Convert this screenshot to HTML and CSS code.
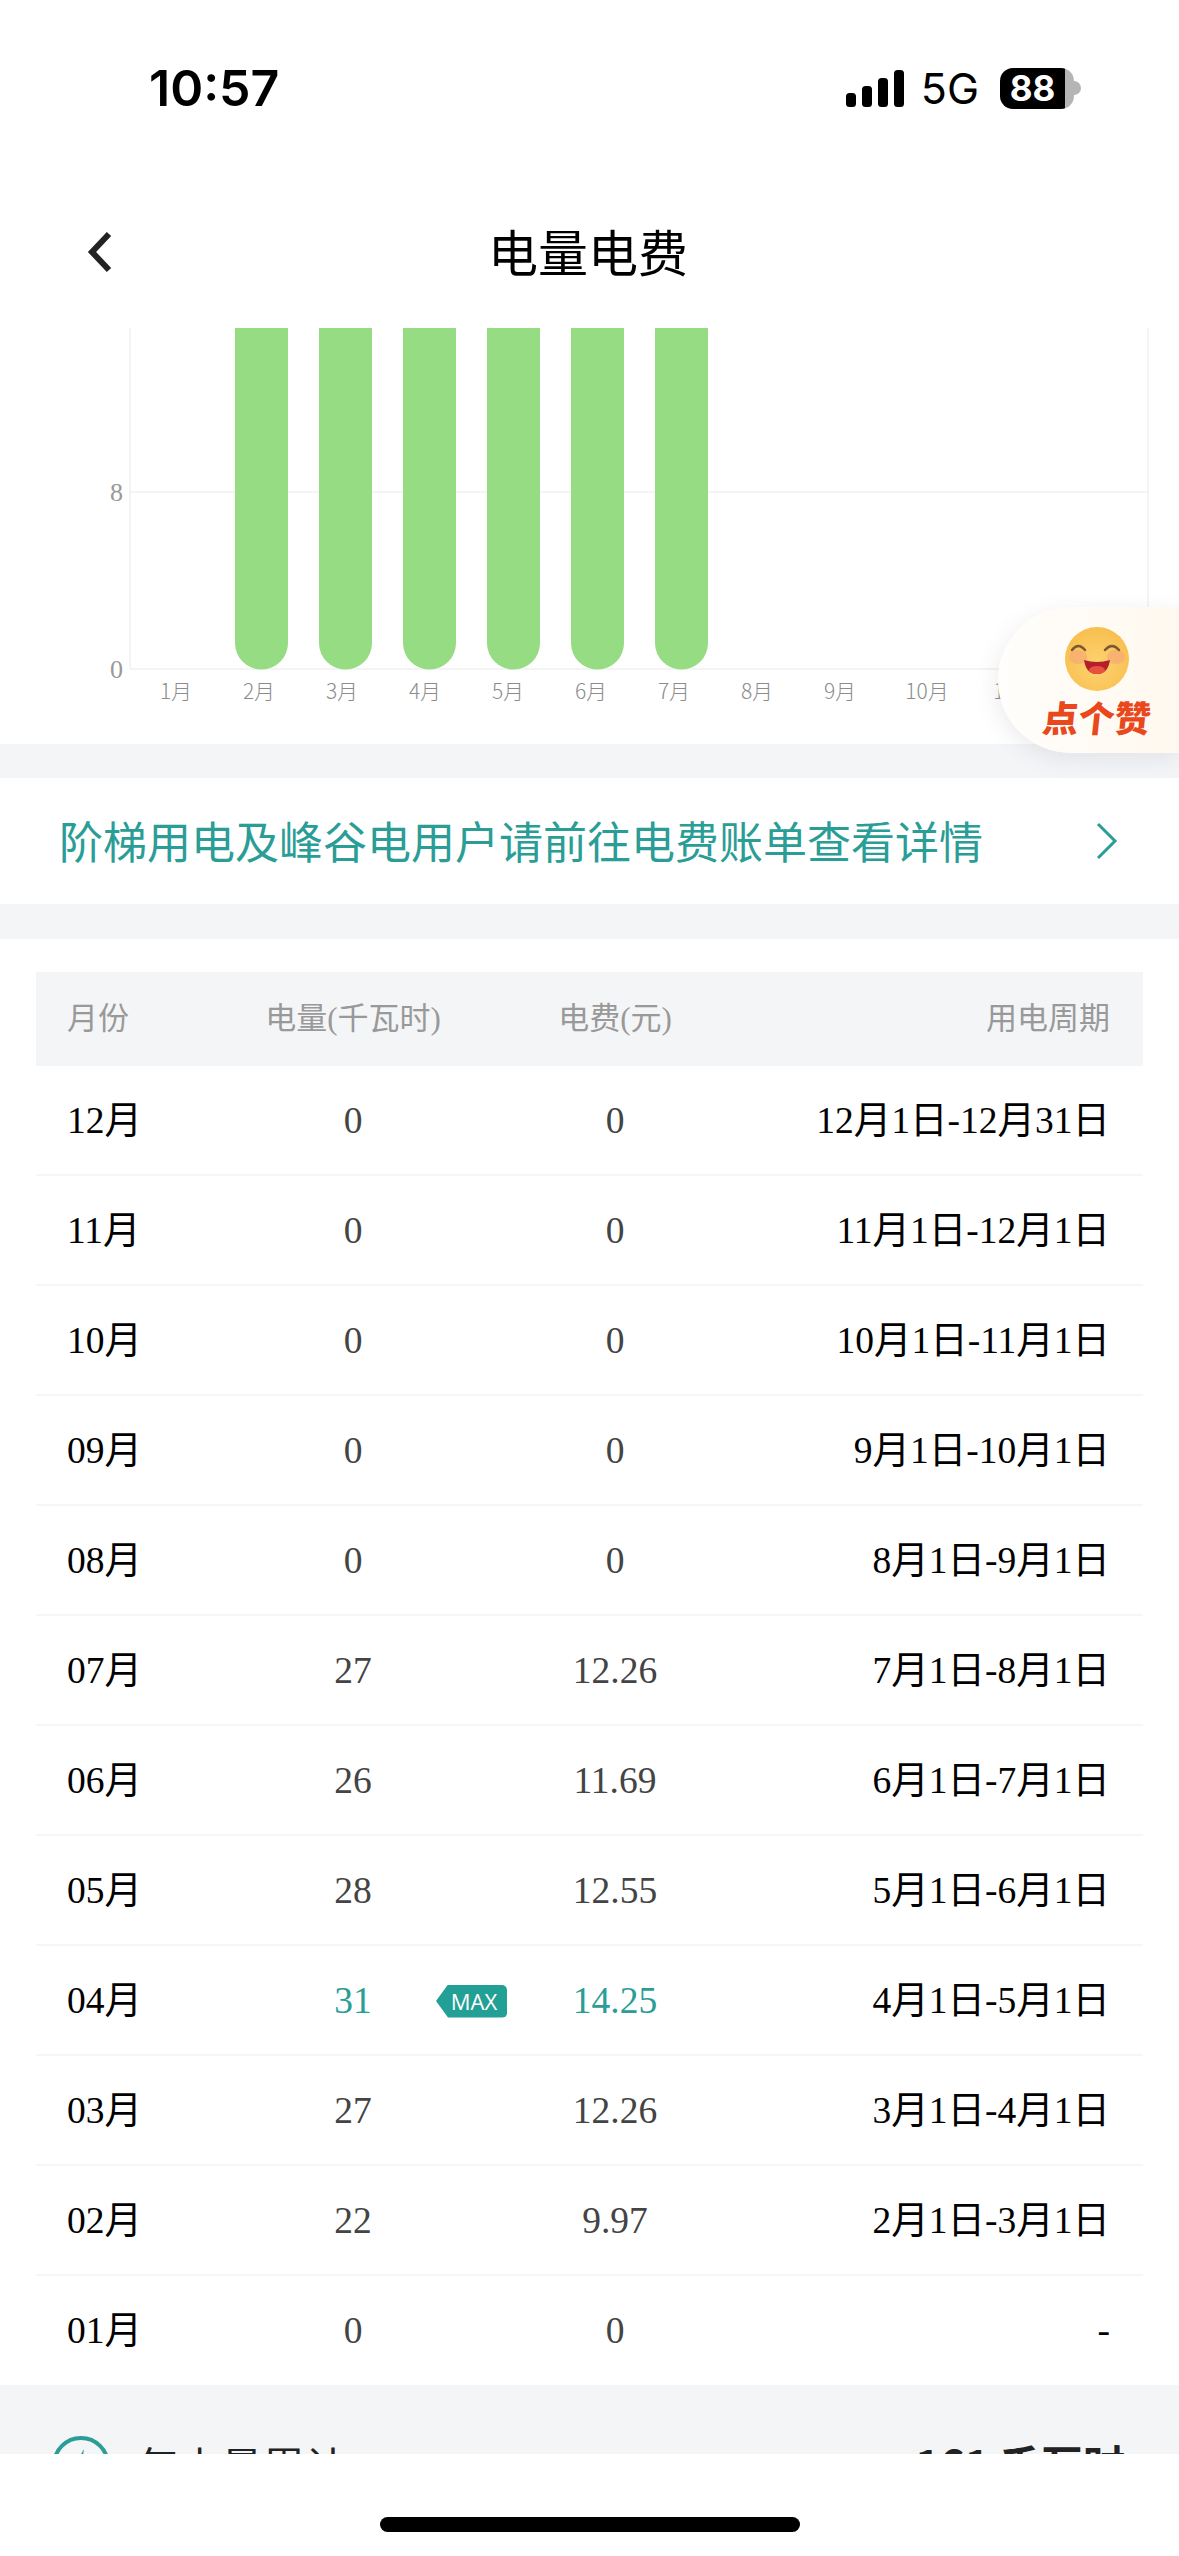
FILE: index.html
```html
<!DOCTYPE html>
<html lang="zh-CN">

<head>
    <meta charset="UTF-8">
    <meta name="viewport" content="width=device-width, initial-scale=1.0">
    <title>电量电费</title>
    <link rel="stylesheet" href="styles.css">
</head>

<body>
    <div class="page">
        <div class="status-bar">
            <span class="time">10:57</span>
            <div class="status-right">
                <svg class="signal" width="58" height="37" viewBox="0 0 58 37">
                    <rect x="0" y="23" width="10" height="14" rx="3.5" />
                    <rect x="16" y="16" width="10" height="21" rx="3.5" />
                    <rect x="32" y="8" width="10" height="29" rx="3.5" />
                    <rect x="48" y="0" width="10" height="37" rx="3.5" />
                </svg>
                <span class="network">5G</span>
                <div class="battery">
                    <div class="battery-body"><span>88</span></div>
                    <div class="battery-nub"></div>
                </div>
            </div>
        </div>

        <div class="nav">
            <svg class="back" width="26" height="42" viewBox="0 0 26 42">
                <path d="M22 3 L5 21 L22 39" fill="none" stroke="#222" stroke-width="6" stroke-linejoin="miter" />
            </svg>
            <span class="nav-title">电量电费</span>
        </div>

        <div class="scroll">
            <div class="chart">
                <svg width="1179" height="416" viewBox="0 0 1179 416">
                    <g stroke="#f0f0f0" stroke-width="1.5">
                        <line x1="130" y1="0" x2="130" y2="341" />
                        <line x1="1148" y1="0" x2="1148" y2="341" />
                        <line x1="130" y1="164" x2="1148" y2="164" />
                        <line x1="130" y1="341" x2="1148" y2="341" />
                    </g>
                    <g fill="#95dc82">
                        <path d="M235 0 h53 v315 a26.5 26.5 0 0 1 -53 0 z" />
                        <path d="M319 0 h53 v315 a26.5 26.5 0 0 1 -53 0 z" />
                        <path d="M403 0 h53 v315 a26.5 26.5 0 0 1 -53 0 z" />
                        <path d="M487 0 h53 v315 a26.5 26.5 0 0 1 -53 0 z" />
                        <path d="M571 0 h53 v315 a26.5 26.5 0 0 1 -53 0 z" />
                        <path d="M655 0 h53 v315 a26.5 26.5 0 0 1 -53 0 z" />
                    </g>
                    <g class="axis-y" text-anchor="end">
                        <text x="123" y="173">8</text>
                        <text x="123" y="350">0</text>
                    </g>
                    <g class="axis-x" text-anchor="middle">
                        <text x="176" y="371">1月</text>
                        <text x="259" y="371">2月</text>
                        <text x="342" y="371">3月</text>
                        <text x="425" y="371">4月</text>
                        <text x="508" y="371">5月</text>
                        <text x="591" y="371">6月</text>
                        <text x="674" y="371">7月</text>
                        <text x="757" y="371">8月</text>
                        <text x="840" y="371">9月</text>
                        <text x="927" y="371">10月</text>
                        <text x="1015" y="371">11月</text>
                    </g>
                </svg>
            </div>

            <div class="band"></div>

            <div class="notice">
                <span class="notice-text">阶梯用电及峰谷电用户请前往电费账单查看详情</span>
                <svg width="22" height="38" viewBox="0 0 22 38">
                    <path d="M2 2 L19 19 L2 36" fill="none" stroke="#2a9d96" stroke-width="3" />
                </svg>
            </div>

            <div class="band band-low"></div>

            <div class="table">
                <div class="row head">
                    <span>月份</span>
                    <span class="center">电量(千瓦时)</span>
                    <span class="center">电费(元)</span>
                    <span class="right">用电周期</span>
                </div>
                <div class="row">
                    <span class="month">12月</span><span class="center num">0</span><span class="center num">0</span><span class="right date">12月1日-12月31日</span>
                </div>
                <div class="row">
                    <span class="month">11月</span><span class="center num">0</span><span class="center num">0</span><span class="right date">11月1日-12月1日</span>
                </div>
                <div class="row">
                    <span class="month">10月</span><span class="center num">0</span><span class="center num">0</span><span class="right date">10月1日-11月1日</span>
                </div>
                <div class="row">
                    <span class="month">09月</span><span class="center num">0</span><span class="center num">0</span><span class="right date">9月1日-10月1日</span>
                </div>
                <div class="row">
                    <span class="month">08月</span><span class="center num">0</span><span class="center num">0</span><span class="right date">8月1日-9月1日</span>
                </div>
                <div class="row">
                    <span class="month">07月</span><span class="center num">27</span><span class="center num">12.26</span><span class="right date">7月1日-8月1日</span>
                </div>
                <div class="row">
                    <span class="month">06月</span><span class="center num">26</span><span class="center num">11.69</span><span class="right date">6月1日-7月1日</span>
                </div>
                <div class="row">
                    <span class="month">05月</span><span class="center num">28</span><span class="center num">12.55</span><span class="right date">5月1日-6月1日</span>
                </div>
                <div class="row">
                    <span class="month">04月</span>
                    <span class="center num max">31<span class="max-tag">MAX</span></span>
                    <span class="center num max">14.25</span>
                    <span class="right date">4月1日-5月1日</span>
                </div>
                <div class="row">
                    <span class="month">03月</span><span class="center num">27</span><span class="center num">12.26</span><span class="right date">3月1日-4月1日</span>
                </div>
                <div class="row">
                    <span class="month">02月</span><span class="center num">22</span><span class="center num">9.97</span><span class="right date">2月1日-3月1日</span>
                </div>
                <div class="row last">
                    <span class="month">01月</span><span class="center num">0</span><span class="center num">0</span><span class="right date">-</span>
                </div>
            </div>

            <div class="total">
                <div class="total-left">
                    <svg width="58" height="58" viewBox="0 0 58 58">
                        <circle cx="29" cy="29" r="27" fill="none" stroke="#2a9d96" stroke-width="4" />
                        <path d="M32 13 L21 32 H29 L26 45 L38 26 H30 z" fill="#2a9d96" />
                    </svg>
                    <span>年电量累计</span>
                </div>
                <span class="total-value">161 千瓦时</span>
            </div>
        </div>

        <div class="footer">
            <div class="home-bar"></div>
        </div>

        <div class="like">
            <svg width="66" height="66" viewBox="0 0 66 66">
                <defs>
                    <radialGradient id="face" cx="50%" cy="60%" r="60%">
                        <stop offset="0%" stop-color="#fdd272" />
                        <stop offset="100%" stop-color="#f8bf4e" />
                    </radialGradient>
                </defs>
                <circle cx="33" cy="33" r="32" fill="url(#face)" />
                <ellipse cx="14" cy="31" rx="9" ry="7" fill="#f7a878" opacity="0.7" />
                <ellipse cx="52" cy="31" rx="9" ry="7" fill="#f7a878" opacity="0.7" />
                <path d="M8 24 Q14 16 21 24 M41 24 Q48 16 55 24" fill="none" stroke="#7a5a34" stroke-width="2.5" stroke-linecap="round" />
                <path d="M20 34 Q33 38 46 34 Q44 48 33 48 Q22 48 20 34 z" fill="#b3202a" />
                <ellipse cx="33" cy="44" rx="8" ry="4" fill="#e8503f" />
            </svg>
            <span class="like-text">点个赞</span>
        </div>
    </div>
</body>

</html>
```

FILE: styles.css
```css
* {
    box-sizing: border-box;
}

body {
    margin: 0;
    background: #fff;
    font-family: "Noto Sans CJK SC", sans-serif;
}

.page {
    position: relative;
    width: 1179px;
    height: 2556px;
    display: flex;
    flex-direction: column;
    overflow: hidden;
}

/* status bar */
.status-bar {
    height: 176px;
    flex: none;
    display: flex;
    align-items: center;
    justify-content: space-between;
    padding: 0 98px 0 149px;
}

.time {
    font-family: Inter, sans-serif;
    font-size: 50px;
    font-weight: 600;
    color: #000;
}

.status-right {
    display: flex;
    align-items: center;
}

.signal {
    margin-right: 17px;
}

.network {
    font-family: Inter, sans-serif;
    font-size: 43px;
    color: #000;
    margin-right: 21px;
}

.battery {
    display: flex;
    align-items: center;
}

.battery-body {
    width: 74px;
    height: 41px;
    border-radius: 13px;
    background: linear-gradient(to right, #000 0, #000 65px, #b5b5b5 65px);
    padding-right: 9px;
    display: flex;
    align-items: center;
    justify-content: center;
}

.battery-body span {
    font-family: Inter, sans-serif;
    font-size: 35px;
    font-weight: 700;
    color: #fff;
}

.battery-nub {
    width: 7px;
    height: 14px;
    background: #b5b5b5;
    border-radius: 0 7px 7px 0;
}

/* nav */
.nav {
    height: 152px;
    flex: none;
    display: flex;
    align-items: center;
    justify-content: center;
    position: relative;
}

.back {
    position: absolute;
    left: 87px;
    top: 55px;
}

.nav-title {
    font-size: 50px;
    line-height: 60px;
    margin-top: -5px;
    margin-left: -3px;
    color: #000;
}

/* content */
.scroll {
    flex: 1;
    min-height: 0;
    overflow: hidden;
}

.chart {
    height: 416px;
}

.chart svg {
    display: block;
}

.axis-y text {
    font-family: "Liberation Serif", serif;
    font-size: 26px;
    fill: #999;
}

.axis-x text {
    font-family: "Noto Sans CJK SC", sans-serif;
    font-size: 21px;
    font-weight: 300;
    fill: #8c8c8c;
}

.band {
    height: 34px;
    background: #f4f5f7;
}

.band-low {
    height: 35px;
}

.notice {
    height: 126px;
    display: flex;
    align-items: center;
    justify-content: space-between;
    padding: 0 61px 0 59px;
}

.notice-text {
    font-size: 44px;
    line-height: 60px;
    margin-top: -3px;
    color: #2a9d96;
}

.table {
    padding: 33px 36px 0;
    font-family: "Liberation Serif", "Noto Sans CJK SC", serif;
}

.row {
    height: 110px;
    display: grid;
    grid-template-columns: 163px 246px 278px 389px;
    align-items: center;
    padding-left: 31px;
    padding-top: 1px;
    border-bottom: 2px solid #f6f6f6;
    font-size: 37.5px;
    line-height: 44px;
}

.row.last {
    height: 109px;
    border-bottom: none;
}

.head {
    height: 94px;
    padding-top: 0;
    background: #f4f5f7;
    border-bottom: none;
    font-size: 31px;
    color: #999;
}

.month,
.date {
    color: #000;
}

.center {
    text-align: center;
}

.right {
    text-align: right;
    padding-right: 33px;
}

.num {
    color: #444;
    position: relative;
}

.max {
    color: #2a9d96;
}

.max-tag {
    position: absolute;
    left: 206px;
    top: 6px;
    width: 71px;
    height: 33px;
    padding-left: 5px;
    background: #23a096;
    color: #fff;
    font-family: "Open Sans", sans-serif;
    font-size: 22px;
    line-height: 33px;
    text-align: center;
    border-radius: 0 5px 5px 0;
    clip-path: polygon(12px 0, 100% 0, 100% 100%, 12px 100%, 0 50%);
}

.total {
    height: 200px;
    background: #f4f5f7;
    display: flex;
    justify-content: space-between;
    align-items: flex-start;
    padding: 49px 54px 0 52px;
}

.total-left {
    display: flex;
    align-items: center;
    gap: 27px;
    font-size: 42px;
    color: #222;
}

.total-value {
    font-size: 42px;
    font-weight: 700;
    color: #222;
    line-height: 58px;
}

.footer {
    height: 102px;
    flex: none;
    background: #fff;
    display: flex;
    justify-content: center;
    padding-top: 63px;
}

.home-bar {
    width: 420px;
    height: 15px;
    border-radius: 8px;
    background: #000;
}

/* floating like button */
.like {
    position: absolute;
    left: 998px;
    top: 607px;
    width: 181px;
    height: 146px;
    border-radius: 73px 0 0 73px;
    background: linear-gradient(to right, #fffefc, #fff8ee);
    box-shadow: -2px 6px 22px rgba(120, 120, 140, 0.14);
    display: flex;
    flex-direction: column;
    align-items: center;
    padding: 19px 0 0 17px;
}

.like-text {
    font-size: 36px;
    line-height: 44px;
    font-weight: 900;
    color: #e8481c;
    transform: skewX(-6deg);
    margin-top: 2px;
}
```
